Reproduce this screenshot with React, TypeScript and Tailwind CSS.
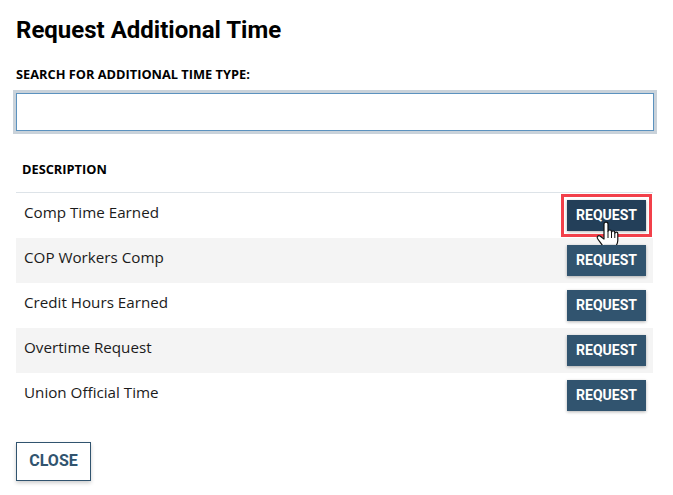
const rows = [
  'Comp Time Earned',
  'COP Workers Comp',
  'Credit Hours Earned',
  'Overtime Request',
  'Union Official Time',
];

// Pointer cursor sitting over the hovered button
function HandCursor() {
  return (
    <svg
      className="absolute left-[23px] top-[15px]"
      width="36"
      height="38"
      viewBox="0 0 36 38"
      fill="none"
    >
      <path
        d="M14 9c0-2.500 4-2.500 4 0v7.500c0-2 3.500-2 3.500 0v1c0-2 3.300-2 3.300 0v1c0-1.800 3-1.800 3 0v7c0 2.500-1 4-2 6v1.500H13.500V32C11.500 28.500 9.500 26.500 7.500 23.500c-1-1.800 .8-3.500 2.500-2.500l4 3Z"
        fill="#ffffff"
        stroke="#111111"
        strokeWidth="1.200"
        strokeLinejoin="round"
      />
      <path d="M18 16.500v6.500M21.500 17.500v5.500M24.800 18.500v4.500" stroke="#111111" strokeWidth="1" />
      <path d="M14 30.500h12" stroke="#b9b9b9" strokeWidth="1.500" />
    </svg>
  );
}

export default function App() {
  return (
    <main className="min-h-screen w-[673px] bg-white pl-4 pr-5 pt-[15px] font-['Open_Sans',sans-serif] text-black">
      <h1 className="font-['Roboto',sans-serif] text-2xl leading-[30px] font-bold">
        Request Additional Time
      </h1>

      <label className="mt-[21px] block text-[12.8px] leading-[16px] font-bold">
        SEARCH FOR ADDITIONAL TIME TYPE:
      </label>
      <input
        type="text"
        className="mt-[11px] block h-[38px] w-[638px] border border-[#5b92bf] bg-white shadow-[0_0_0_3px_#c9d2da] outline-none"
      />

      <div className="mt-[21px] flex h-[41px] items-center border-b border-[#dde3e8] px-1.5 pb-1">
        <span className="text-[12.8px] font-bold">DESCRIPTION</span>
      </div>

      {rows.map((name, i) => (
        <div
          key={name}
          className={`flex h-[45px] items-start justify-between pr-[7px] pl-2 ${i % 2 === 1 ? 'bg-[#f4f4f4]' : 'bg-white'}`}
        >
          <span className="pt-[9px] text-[15.2px] leading-[20px] text-[#1b1b1b]">
            {name}
          </span>
          <div className="relative mt-[7px]">
            <button
              className={`h-[31px] w-[79px] pb-px font-['Roboto',sans-serif] text-sm font-bold text-white shadow-[0_1px_3px_rgba(0,0,0,0.3)] ${i === 0 ? 'bg-[#233f59] outline-[3px] outline-offset-[3px] outline-[#f2404a]' : 'bg-[#31546f]'}`}
            >
              REQUEST
            </button>
            {i === 0 && <HandCursor />}
          </div>
        </div>
      ))}

      <button className="mt-[24px] h-[39px] w-[75px] border border-[#31546f] bg-white pb-0.5 font-['Roboto',sans-serif] text-base font-bold text-[#31546f] shadow-[0_2px_4px_rgba(0,0,0,0.2)]">
        CLOSE
      </button>
    </main>
  );
}
